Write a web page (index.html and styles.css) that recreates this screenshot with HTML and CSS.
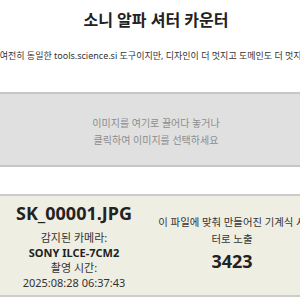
FILE: index.html
```html
<!DOCTYPE html>
<html lang="ko">
<head>
<meta charset="utf-8">
<title>소니 알파 셔터 카운터</title>
<link rel="stylesheet" href="styles.css">
</head>
<body>
<main class="page">
  <header class="head">
    <h1 class="title">소니 알파 셔터 카운터</h1>
    <p class="sub">여전히 동일한 tools.science.si 도구이지만, 디자인이 더 멋지고 도메인도 더 멋지죠.</p>
  </header>
  <div class="drop">
    <p class="drop-text">이미지를 여기로 끌어다 놓거나<br>클릭하여 이미지를 선택하세요</p>
  </div>
  <section class="result">
    <div class="col col-left">
      <div class="filename">SK_00001.JPG</div>
      <div class="line">감지된 카메라:</div>
      <div class="line strong">SONY ILCE-7CM2</div>
      <div class="line">촬영 시간:</div>
      <div class="line">2025:08:28 06:37:43</div>
    </div>
    <div class="col col-right">
      <div class="label">이 파일에 맞춰 만들어진 기계식 셔터로 노출</div>
      <div class="count">3423</div>
    </div>
  </section>
</main>
</body>
</html>
```

FILE: styles.css
```css
html, body {
  margin: 0;
  padding: 0;
  overflow: hidden;
  background: #ffffff;
}
body {
  font-family: "Noto Sans", "Noto Sans CJK KR", sans-serif;
  color: #222222;
}
.page {
  width: 312px;
}
.head {
  display: flex;
  flex-direction: column;
  align-items: center;
}
.title {
  margin: 10px 0 0;
  font-size: 16px;
  line-height: 20px;
  font-weight: 700;
  color: #222222;
  white-space: nowrap;
}
.sub {
  margin: 20px 0 0;
  font-size: 9px;
  line-height: 12px;
  color: #333333;
  white-space: nowrap;
}
.drop {
  margin-top: 30px;
  height: 71px;
  background: #e0e0e0;
  border-top: 2px solid #c6c6c6;
  border-bottom: 2px solid #c6c6c6;
  display: flex;
  align-items: center;
  justify-content: center;
}
.drop-text {
  margin: 4px 0 0;
  font-size: 10px;
  line-height: 16.5px;
  color: #8c8c8c;
  text-align: center;
}
.result {
  margin-top: 27px;
  width: 316px;
  display: grid;
  grid-template-columns: 148px 168px;
  background: #efeee3;
  border-top: 2px solid #cccccc;
  border-bottom: 2px solid #cccccc;
  height: 99px;
}
.col {
  display: flex;
  flex-direction: column;
  align-items: center;
  text-align: center;
}
.col-left {
  padding-top: 6px;
}
.filename {
  font-size: 18px;
  line-height: 22px;
  font-weight: 700;
  color: #222222;
  margin-bottom: 6px;
}
.line {
  font-size: 11px;
  line-height: 15px;
  color: #333333;
  white-space: nowrap;
}
.strong {
  font-weight: 700;
  color: #222222;
}
.col-right {
  padding-top: 18px;
}
.label {
  width: 156px;
  font-size: 10.4px;
  line-height: 17px;
  color: #333333;
}
.count {
  margin-top: 2px;
  font-size: 18px;
  line-height: 22px;
  font-weight: 700;
  color: #222222;
}
```
